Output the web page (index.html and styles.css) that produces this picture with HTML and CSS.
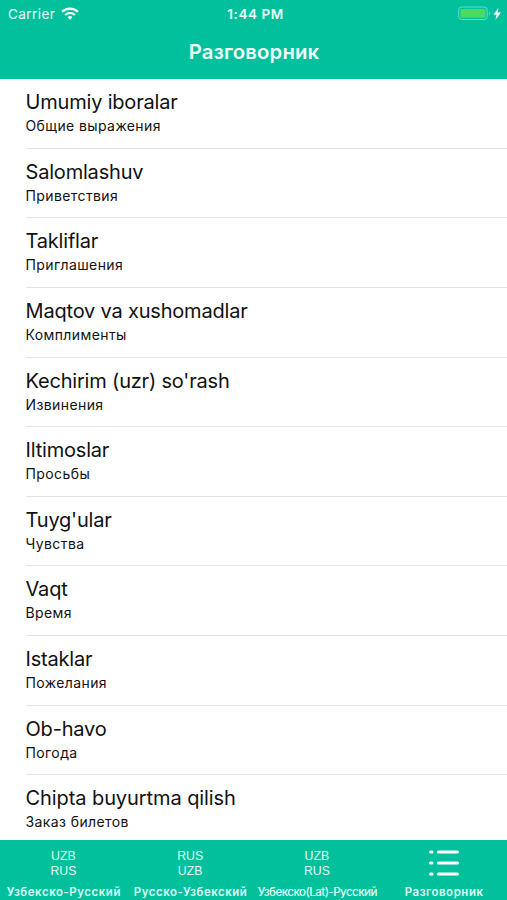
FILE: index.html
```html
<!DOCTYPE html>
<html lang="ru"><head><meta charset="utf-8"><title>Разговорник</title><link rel="stylesheet" href="styles.css"></head>
<body>
<header class="top">
<div class="status"><div class="carrier"><span class="t-carrier">Carrier</span><svg class="wifi" width="18" height="13" viewBox="0 0 18 13" fill="none" stroke="#fff" stroke-width="2.2"><path d="M1.1 4.8a11.3 11.3 0 0 1 15.8 0M4.2 8a6.8 6.8 0 0 1 9.6 0"/><path d="M9 12.7L6.6 10.3a3.4 3.4 0 0 1 4.8 0z" fill="#fff" stroke="none"/></svg></div>
<span class="t-clock">1:44 PM</span>
<svg class="battery" width="45" height="16" viewBox="0 0 45 16"><rect x=".7" y="1" width="28.5" height="12.5" rx="3" fill="none" stroke="#67dcc5"/><rect x="2.5" y="3" width="25" height="8.7" rx="1" fill="#4cd964"/><path d="M31 5.3q2.4 2 0 4z" fill="#67dcc5"/><path d="M40.5 1.7L35.5 8.7h3.2L37.4 13.7l5.6-7.3h-3.5z" fill="#fff"/></svg></div>
<h1><span class="t-title">Разговорник</span></h1>
</header>
<main class="list">
<div class="row"><h2><span>Umumiy iboralar</span></h2><p><span>Общие выражения</span></p></div>
<div class="row"><h2><span>Salomlashuv</span></h2><p><span>Приветствия</span></p></div>
<div class="row"><h2><span>Takliflar</span></h2><p><span>Приглашения</span></p></div>
<div class="row"><h2><span>Maqtov va xushomadlar</span></h2><p><span>Комплименты</span></p></div>
<div class="row"><h2><span>Kechirim (uzr) so'rash</span></h2><p><span>Извинения</span></p></div>
<div class="row"><h2><span>Iltimoslar</span></h2><p><span>Просьбы</span></p></div>
<div class="row"><h2><span>Tuyg'ular</span></h2><p><span>Чувства</span></p></div>
<div class="row"><h2><span>Vaqt</span></h2><p><span>Время</span></p></div>
<div class="row"><h2><span>Istaklar</span></h2><p><span>Пожелания</span></p></div>
<div class="row"><h2><span>Ob-havo</span></h2><p><span>Погода</span></p></div>
<div class="row"><h2 class="roomy"><span>Chipta buyurtma qilish</span></h2><p><span>Заказ билетов</span></p></div>
</main>
<nav class="tabs">
<div class="tab"><div class="icon">UZB<br>RUS</div><span class="label">Узбекско-Русский</span></div>
<div class="tab"><div class="icon">RUS<br>UZB</div><span class="label">Русско-Узбекский</span></div>
<div class="tab"><div class="icon">UZB<br>RUS</div><span class="label tight">Узбекско(Lat)-Русский</span></div>
<div class="tab"><div class="icon"><svg width="32" height="28" viewBox="0 0 32 28" fill="none" stroke="#fff" stroke-width="3" stroke-linecap="round"><path d="M2.5 3H4M10.5 3h19M2.5 14H4M10.5 14h19M2.5 25H4M10.5 25h19"/></svg></div><span class="label">Разговорник</span></div>
</nav>
</body></html>
```
FILE: styles.css
```css
*{box-sizing:border-box}
body{margin:0;width:507px;height:900px;overflow:hidden;display:flex;flex-direction:column;font-family:Inter,"Liberation Sans",sans-serif;background:#fff;color:#111}
h1,h2,p{margin:0;font-weight:400}
.top{height:79px;flex:none;background:#03c09d;color:#fff}
.status{height:27px;display:grid;grid-template-columns:1fr auto 1fr;align-items:center;padding:0 4px 0 8px;font-size:13.5px}
.carrier{display:flex;align-items:center;gap:6px;letter-spacing:.45px;color:#e6fff8}
.t-clock{font-weight:600;letter-spacing:.55px;color:#e6fff8}
.battery{justify-self:end}
.top h1{height:52px;line-height:50px;text-align:center;font-size:20.3px;font-weight:600;letter-spacing:.15px;color:#effffb}
.t-title{padding-left:1px}
.list{flex:1;min-height:0;overflow:hidden;padding-left:25.5px}
.row{height:69.65px;border-bottom:1px solid #e4e4e5;padding-top:9px}
.row h2{font-size:20px;line-height:28px;letter-spacing:-.19px}
.row .roomy{letter-spacing:-.08px}
.row p{font-size:14px;line-height:20px;letter-spacing:.4px}
.tabs{height:60px;flex:none;display:grid;grid-template-columns:repeat(4,1fr);background:#03c09d;color:#dcfff5}
.tab{display:flex;flex-direction:column;align-items:center;padding-top:9px;min-width:0}
.icon{height:34px;font-family:"Liberation Sans",sans-serif;font-size:12.3px;line-height:15px;text-align:center}
.label{padding-left:1px;font-size:11.4px;line-height:18px;font-weight:600;letter-spacing:.58px;white-space:nowrap}
.tight{letter-spacing:-.56px;font-weight:500;font-size:11.6px}
```
